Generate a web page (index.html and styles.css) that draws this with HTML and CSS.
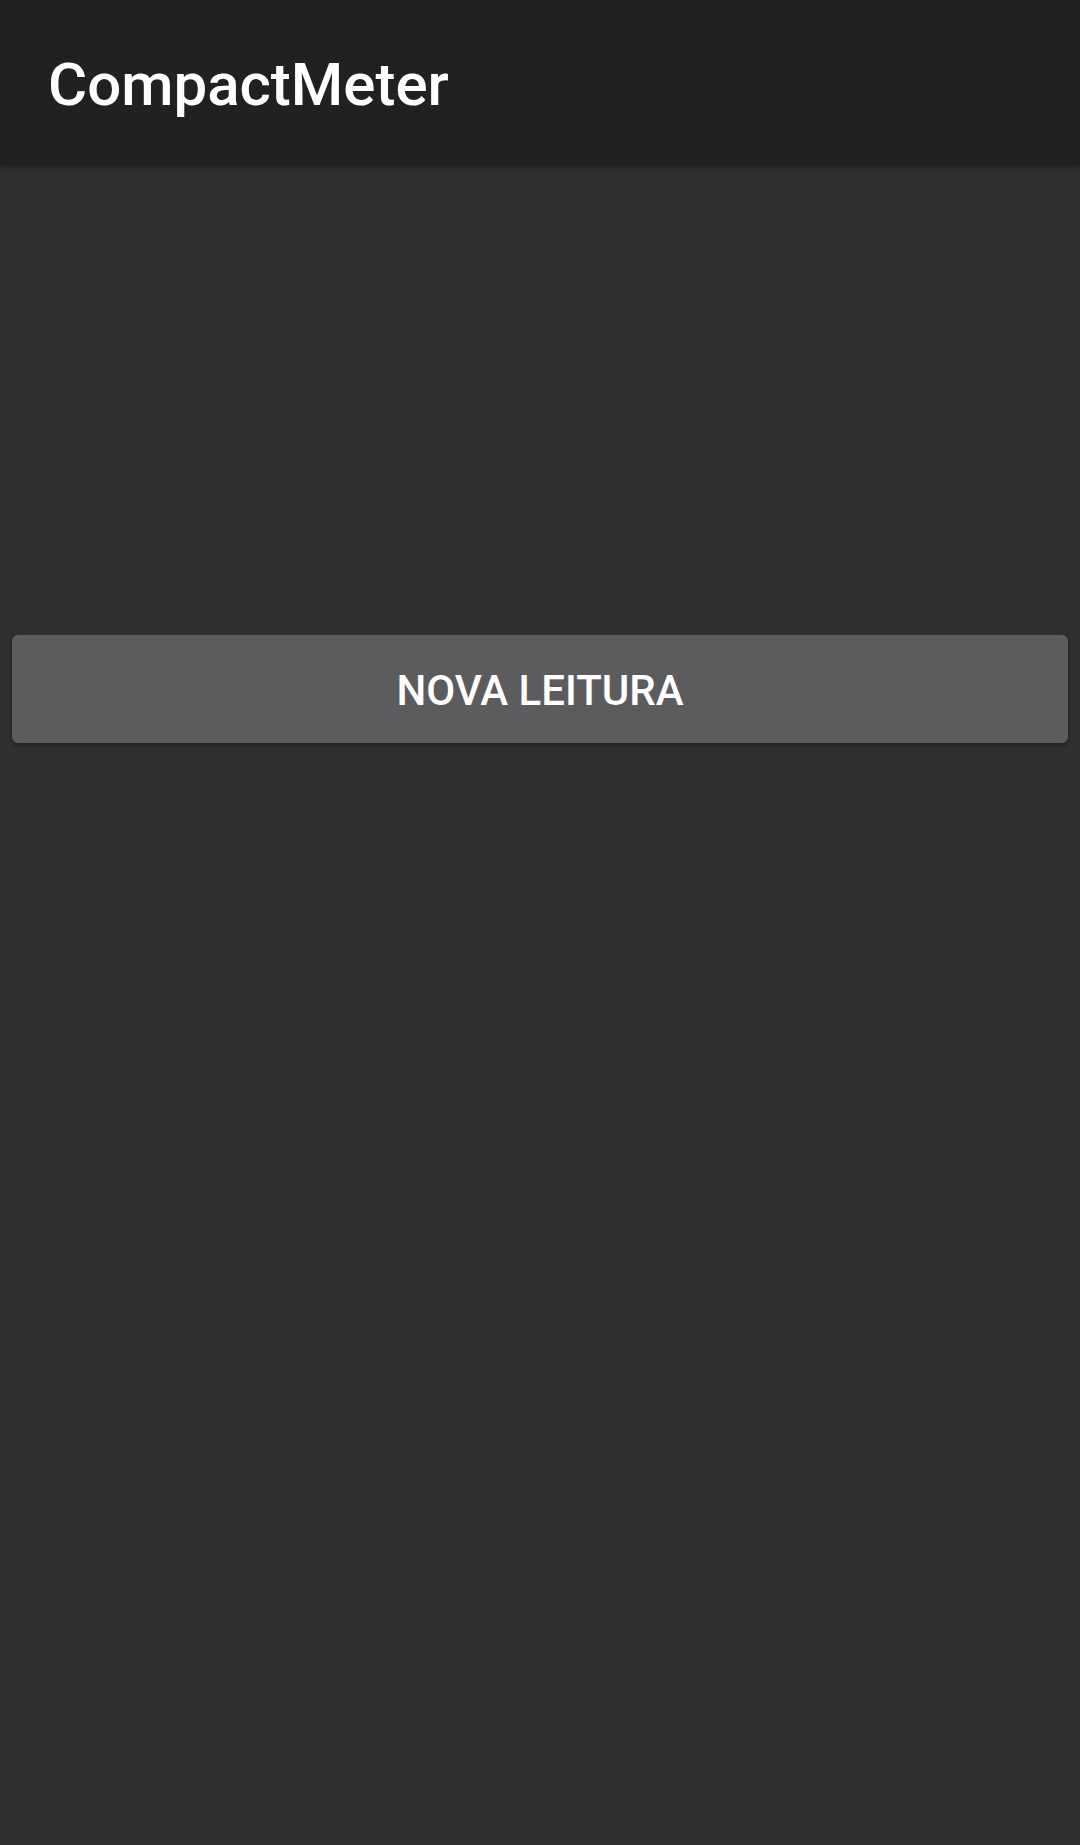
FILE: index.html
```html
<!DOCTYPE html>
<html lang="pt">
<head>
<meta charset="utf-8">
<title>CompactMeter</title>
<link rel="stylesheet" href="styles.css">
</head>
<body>
<header class="toolbar">
  <h1 class="title">CompactMeter</h1>
</header>
<main class="content">
  <button class="btn" type="button">NOVA LEITURA</button>
</main>
</body>
</html>
```

FILE: styles.css
```css
html, body {
  margin: 0;
  padding: 0;
}
body {
  background: #303030;
  width: 1080px;
  height: 1845px;
  font-family: Roboto, "Noto Sans", sans-serif;
  overflow: hidden;
  display: flex;
  flex-direction: column;
}
.toolbar {
  height: 165px;
  background: #212121;
  box-shadow: 0 2px 6px rgba(0, 0, 0, 0.35);
  display: flex;
  align-items: center;
  padding-left: 48px;
  position: relative;
  z-index: 1;
  flex-shrink: 0;
}
.title {
  margin: 0;
  color: #ffffff;
  font-size: 60px;
  font-weight: 500;
  line-height: 1;
  padding-top: 4px;
}
.content {
  flex: 1;
  padding: 470px 12px 0;
}
.btn {
  display: block;
  width: 100%;
  height: 108px;
  border: none;
  border-radius: 6px;
  background: #5c5c5e;
  color: #ffffff;
  font-family: Roboto, "Noto Sans", sans-serif;
  font-size: 42px;
  font-weight: 500;
  letter-spacing: 0;
  box-shadow: 0 3px 4px rgba(0, 0, 0, 0.3);
  padding: 2px 0 0;
}
```
